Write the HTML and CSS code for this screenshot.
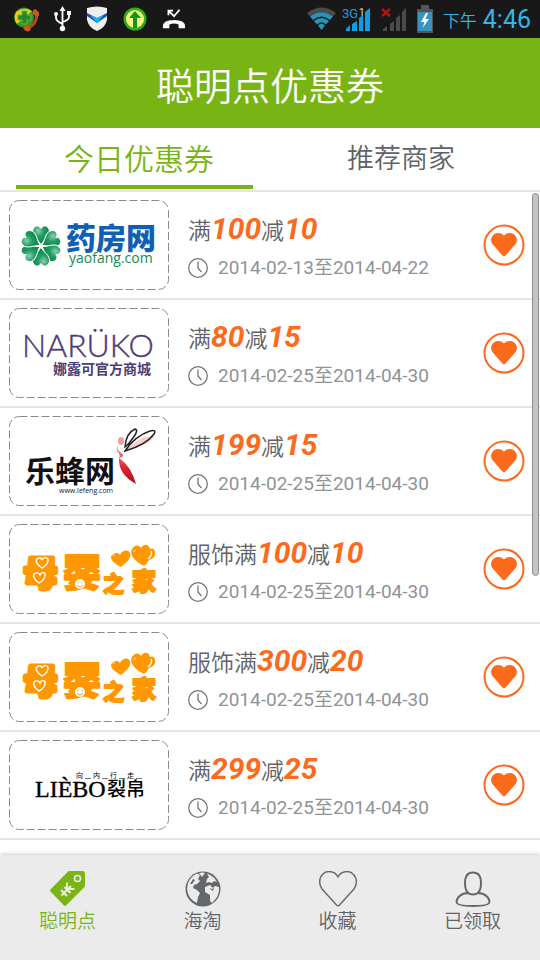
FILE: index.html
```
<!DOCTYPE html>
<html lang="zh-CN">
  <head>
    <meta charset="UTF-8" />
    <meta name="viewport" content="width=device-width, initial-scale=1.0" />
    <title>聪明点优惠券</title>
    <link rel="stylesheet" href="styles.css">
  </head>
  <body>
    <!-- 公用图标 -->
    <svg class="symbols" aria-hidden="true">
      <symbol id="clock" viewBox="0 0 20 20">
        <circle cx="10" cy="10" r="9.3" fill="none" stroke="#73777a" stroke-width="1.3" />
        <path d="M10 3.5V10l3.4 4" fill="none" stroke="#73777a" stroke-width="1.3" />
      </symbol>
      <symbol id="heart" viewBox="0 0 42 42">
        <circle cx="21" cy="21" r="19.5" fill="#fff" stroke="#fc6a1c" stroke-width="2" />
        <path d="M21 11.6C24 8.2 29 8.4 31.6 10.8C34.6 13.5 34.6 18 32 20.8L22.6 31.4Q21 33 19.4 31.4L10 20.8C7.4 18 7.4 13.5 10.4 10.8C13 8.4 18 8.2 21 11.6Z" fill="#fc6a1c" />
      </symbol>
      <symbol id="petal" viewBox="-11 -22 22 22" overflow="visible">
        <path d="M0 -1C-2 -6 -9 -9 -8.500 -15C-7.500 -21 -2 -21.500 0 -17.500C2 -21.500 7.500 -21 8.500 -15C9 -9 2 -6 0 -1Z" fill="url(#leaf)" stroke="#fff" stroke-width="1" />
      </symbol>
      <radialGradient id="leaf" cx="35%" cy="25%" r="80%">
        <stop offset="0" stop-color="#8ed0ae" />
        <stop offset="0.4" stop-color="#1f9d63" />
        <stop offset="1" stop-color="#087a44" />
      </radialGradient>
      <linearGradient id="bee" x1="0" y1="0" x2="0" y2="1">
        <stop offset="0" stop-color="#f4a5a0" />
        <stop offset="0.600" stop-color="#dd2430" />
        <stop offset="1" stop-color="#a8101c" />
      </linearGradient>
      <symbol id="muying" viewBox="0 0 160 90">
        <g class="muying">
          <text class="thick" x="15" y="61" font-size="33">母</text>
          <text x="54" y="62" font-size="38">婴</text>
          <text x="94" y="67" font-size="21">之</text>
          <text x="123" y="66" font-size="24">家</text>
        </g>
        <path d="M33 44C28 41 26 37 28 35C30 33 33 34 33 36C34 33 38 33 39 35C40 38 37 42 33 44ZM30 59C25 56 24 52 25 50C27 48 30 49 31 51C32 48 36 48 36 50C37 53 34 57 30 59Z" fill="#ff9800" stroke="#fff" stroke-width="1.400" />
        <circle cx="71" cy="60" r="5" fill="#fff" />
        <path d="M68 61Q71 65 74 61M69 58v1M73 58v1" fill="none" stroke="#ff9800" />
        <path d="M112 43C104 39 100 34 103 31C106 28 110 29 111 31C113 26 119 25 121 29C123 34 117 39 112 43Z" fill="#ff9800" />
        <path d="M135 42C125 37 120 30 123 25C126 20 131 21 132 24C135 19 140 20 141 25Q145 23 146 28Q147 34 140 36Q138 40 135 42Z" fill="#ff9800" />
        <path d="M142 27Q144 31 139 35" fill="none" stroke="#fff" stroke-width="1.400" />
        <path d="M104 32Q104 30 106 30M125 28Q125 26 127 26" fill="none" stroke="#fff" stroke-width="0.600" />
      </symbol>
    </svg>

    <div class="status-bar">
      <svg width="25" height="26" viewBox="0 0 25 26">
        <circle cx="10" cy="11.500" r="10" fill="#2d9a2c" />
        <path d="M2 6Q10 0 18 5L3 18Q-1 13 2 6Z" fill="#e8cb20" />
        <path d="M8 5h5v4h4v5h-4v4H8v-4H4V9h4Z" fill="#28862c" stroke="#6db52b" />
        <path d="M22 7C24 13 20 21 12 22" fill="none" stroke="#b8481a" stroke-width="3" stroke-linecap="round" />
        <path d="M21 6L23 8M12 22L14 23" fill="none" stroke="#cf5720" stroke-width="5" stroke-linecap="round" />
      </svg>
      <svg width="17" height="26" viewBox="0 0 17 26">
        <path d="M8.500 3V22M2 8v4q0 3 6.500 6M15 7v4q0 3-6.500 5" fill="none" stroke="#fff" stroke-width="1.800" />
        <path d="M5.500 5L8.500 0L11.500 5ZM13 5h4v4h-4Z" fill="#fff" />
        <circle cx="2" cy="8" r="2" fill="#fff" />
        <circle cx="8.500" cy="22.500" r="2.700" fill="#fff" />
      </svg>
      <svg width="22" height="26" viewBox="0 0 22 26">
        <path d="M1 2Q11-1 21 2V14Q19 22 11 25Q3 22 1 14Z" fill="#eee" />
        <path d="M1 7L11 12L21 7V10L11 17L1 10Z" fill="#1c4eb0" />
        <path d="M4 9L11 12L18 9L11 17Z" fill="#17b5ee" />
      </svg>
      <svg width="24" height="24" viewBox="0 0 24 24">
        <circle cx="12" cy="12" r="11.500" fill="#2fae1c" />
        <circle cx="12" cy="12" r="9" fill="#f3f77a" />
        <path d="M12 4L18 11H14V21H10V11H6Z" fill="#159224" />
      </svg>
      <svg width="24" height="24" viewBox="0 0 26 24">
        <path d="M7 3L13 9L19 2M7 8V3h5" fill="none" stroke="#fff" stroke-width="2" />
        <path d="M1 20Q1 13 13 13Q25 13 25 20V22H18V18Q13 16 8 18V22H1Z" fill="#fff" />
      </svg>
      <div class="status-right">
        <div class="signal">
          <svg width="31" height="24" viewBox="0 0 31 24">
            <path d="M1 6Q15.500-5 30 6L27 9.500Q15.500 1 4 9.500Z" fill="#4b4b4b" />
            <path d="M4 9.500Q15.500 1 27 9.500L24 13Q15.500 6 7 13Z" fill="#2b92ba" />
            <path d="M8 14Q15.500 8 23 14L20 17.500Q15.500 13 11 17.500ZM12 18.500Q15.500 15 19 18.500L15.500 23Z" fill="#2b92ba" />
          </svg>
          <svg width="29" height="25" viewBox="0 0 29 25">
            <path d="M4 24v-2l4-4v6ZM10 24V17l5-3V24ZM17 24V11l4-3V24ZM23 24V5l5-4V24Z" fill="#0d9ee6" />
            <text x="0" y="11" class="net">3G</text>
            <text x="17" y="9" class="slot">1</text>
          </svg>
        </div>
        <svg width="26" height="25" viewBox="0 0 26 25">
          <path d="M2 24v-2l4-3v5ZM9 24V17l4-3V24ZM15 24V11l4-3V24ZM21 24V5l4-4V24Z" fill="#4b4b4b" />
          <path d="M1 2L9 9M9 2L1 9" stroke="#b51212" stroke-width="2.400" />
        </svg>
        <svg width="16" height="28" viewBox="0 0 16 28">
          <path d="M0 4H4V0H12V4H16V28H0Z" fill="#555" />
          <path d="M1 7H15V26H1Z" fill="#3894bf" />
          <path d="M9 8L4 17H7.500L5.500 23L12 14H8.500L11 8Z" fill="#fff" />
        </svg>
        <span class="ampm">下午</span>
        <span class="time">4:46</span>
      </div>
    </div>

    <header class="header">
      <h1>聪明点优惠券</h1>
    </header>

    <div class="tabs">
      <button class="tab active">今日优惠券</button>
      <button class="tab">推荐商家</button>
    </div>

    <main class="content">
      <ul class="coupons">
        <li class="coupon">
          <svg class="logo" viewBox="0 0 160 90" role="img" aria-label="药房网">
            <rect class="frame" x="0.500" y="0.500" width="159" height="89" rx="10" />
            <g transform="translate(32 46)">
              <use href="#petal" x="-11" y="-22" width="22" height="22" />
              <use href="#petal" x="-11" y="-22" width="22" height="22" transform="rotate(60)" />
              <use href="#petal" x="-11" y="-22" width="22" height="22" transform="rotate(120)" />
              <use href="#petal" x="-11" y="-22" width="22" height="22" transform="rotate(180)" />
              <use href="#petal" x="-11" y="-22" width="22" height="22" transform="rotate(240)" />
              <use href="#petal" x="-11" y="-22" width="22" height="22" transform="rotate(300)" />
            </g>
            <text class="yaofang" x="57" y="49">药房网</text>
            <text class="yaofang-url" x="60" y="63">yaofang.com</text>
          </svg>
          <div class="info">
            <h2>满<em>100</em>减<em>10</em></h2>
            <p><svg class="clock"><use href="#clock" /></svg>2014-02-13至2014-04-22</p>
          </div>
          <button class="like" aria-label="收藏"><svg><use href="#heart" /></svg></button>
        </li>
        <li class="coupon">
          <svg class="logo" viewBox="0 0 160 90" role="img" aria-label="NARUKO">
            <rect class="frame" x="0.500" y="0.500" width="159" height="89" rx="10" />
            <text class="naruko" x="13" y="49">NARÜKO</text>
            <text class="naruko-cn" x="44" y="66">娜露可官方商城</text>
          </svg>
          <div class="info">
            <h2>满<em>80</em>减<em>15</em></h2>
            <p><svg class="clock"><use href="#clock" /></svg>2014-02-25至2014-04-30</p>
          </div>
          <button class="like" aria-label="收藏"><svg><use href="#heart" /></svg></button>
        </li>
        <li class="coupon">
          <svg class="logo" viewBox="0 0 160 90" role="img" aria-label="乐蜂网">
            <rect class="frame" x="0.500" y="0.500" width="159" height="89" rx="10" />
            <text class="lefeng" x="16" y="66">乐蜂网</text>
            <text class="lefeng-url" x="50" y="77">www.lefeng.com</text>
            <path d="M115 34L134 21L146 20Q138 31 115 34Z" fill="#f8cfca" />
            <ellipse cx="112" cy="25" rx="3" ry="4" fill="#f3a09b" />
            <path d="M111 28Q106 32 111 36Q116 39 113 41L110 42Q122 50 127 68Q109 58 110 42Q112 39 108 35Q107 30 111 28Z" fill="url(#bee)" />
            <path d="M116 31Q117 17 126 13Q130 14 124 22Q120 28 116 31ZM116 35Q126 20 141 15Q148 13 145 18Q137 29 116 35Z" fill="none" stroke="#222" stroke-width="1.500" />
          </svg>
          <div class="info">
            <h2>满<em>199</em>减<em>15</em></h2>
            <p><svg class="clock"><use href="#clock" /></svg>2014-02-25至2014-04-30</p>
          </div>
          <button class="like" aria-label="收藏"><svg><use href="#heart" /></svg></button>
        </li>
        <li class="coupon">
          <svg class="logo" viewBox="0 0 160 90" role="img" aria-label="母婴之家">
            <rect class="frame" x="0.500" y="0.500" width="159" height="89" rx="10" />
            <use href="#muying" />
          </svg>
          <div class="info">
            <h2>服饰满<em>100</em>减<em>10</em></h2>
            <p><svg class="clock"><use href="#clock" /></svg>2014-02-25至2014-04-30</p>
          </div>
          <button class="like" aria-label="收藏"><svg><use href="#heart" /></svg></button>
        </li>
        <li class="coupon">
          <svg class="logo" viewBox="0 0 160 90" role="img" aria-label="母婴之家">
            <rect class="frame" x="0.500" y="0.500" width="159" height="89" rx="10" />
            <use href="#muying" />
          </svg>
          <div class="info">
            <h2>服饰满<em>300</em>减<em>20</em></h2>
            <p><svg class="clock"><use href="#clock" /></svg>2014-02-25至2014-04-30</p>
          </div>
          <button class="like" aria-label="收藏"><svg><use href="#heart" /></svg></button>
        </li>
        <li class="coupon">
          <svg class="logo" viewBox="0 0 160 90" role="img" aria-label="裂帛">
            <rect class="frame" x="0.500" y="0.500" width="159" height="89" rx="10" />
            <text class="liebo" x="26" y="57">LIÈBO</text>
            <text class="liebo-cn" x="98" y="56">裂帛</text>
            <text class="liebo-sub" x="67" y="38">向</text>
            <text class="liebo-sub" x="84" y="38">内</text>
            <text class="liebo-sub" x="101" y="38">行</text>
            <text class="liebo-sub" x="118" y="38">走</text>
            <path d="M76 38.500h6M93 38.500h6M110 38.500h6M127 38.500h6" stroke="#777" />
          </svg>
          <div class="info">
            <h2>满<em>299</em>减<em>25</em></h2>
            <p><svg class="clock"><use href="#clock" /></svg>2014-02-25至2014-04-30</p>
          </div>
          <button class="like" aria-label="收藏"><svg><use href="#heart" /></svg></button>
        </li>
      </ul>
      <div class="scroll-thumb"></div>
    </main>

    <nav class="bottom-nav">
      <a href="#" class="active">
        <svg viewBox="0 0 36 36">
          <path d="M18 0.500Q19 0 20 0H32Q35 0 35 3V14Q35 15.500 34 16.500L16 34.500Q15 35.500 14 34.500L0.500 20.500Q-0.300 19.500 0.500 18.500Z" fill="#7ab516" />
          <circle cx="27.500" cy="7.500" r="3" fill="none" stroke="#ebebeb" stroke-width="1.600" />
          <path d="M11.500 24.500L21 15M11 19l6 6M14.500 16l6 6M17 11.500V17.500M18.500 18H24.500" fill="none" stroke="#ebebeb" stroke-width="2" />
        </svg>
        <span>聪明点</span>
      </a>
      <a href="#">
        <svg viewBox="0 0 36 36">
          <circle cx="18" cy="18" r="17.500" fill="#64686b" />
          <path d="M3 12Q6 5 12 2.500L15 4L13 8L15 10L12 13L9 14L8 17L12 19L15 22L13 26L12 32Q3 28 2 18ZM14 2Q18 1 20 2L17 6ZM22 2.500Q29 5 32 11L29 10L27 12L24 11L21 12L22 8L24 6ZM20 16L25 14L28 17L30 15L34 16Q35 25 27 32L25 30V24L20 21Z" fill="#ebebeb" />
          <path d="M5 13l3-5 2 1-3 4ZM24 17l3 1 2-1-1 3Z" fill="#64686b" />
        </svg>
        <span>海淘</span>
      </a>
      <a href="#">
        <svg class="wide" viewBox="0 0 38 36">
          <path d="M19 6C22 0 30-1 34 3C38.500 7 38 14 35 18L20.500 34Q19 35.500 17.500 34L3 18C0 14-0.500 7 4 3C8-1 16 0 19 6Z" fill="none" stroke="#64686b" stroke-width="1.400" />
        </svg>
        <span>收藏</span>
      </a>
      <a href="#">
        <svg viewBox="0 0 36 36">
          <path d="M18 1.500C12 1.500 10 6 10 12C10 18 12 23.500 18 23.500C24 23.500 26 18 26 12C26 6 24 1.500 18 1.500ZM13 22C6 22 1.500 27 1.500 31Q2 35 18 35Q34 35 34.500 31C34.500 27 30 22 23 22" fill="none" stroke="#64686b" stroke-width="1.900" />
        </svg>
        <span>已领取</span>
      </a>
    </nav>
  </body>
</html>
```
FILE: styles.css
```
* {
  box-sizing: border-box;
}

body {
  display: flex;
  flex-direction: column;
  height: 100vh;
  margin: 0;
  font-family: Roboto, "Noto Sans CJK SC", sans-serif;
  font-weight: 350;
  color: #5f6367;
  background-color: #fff;
}

h1,
h2,
p,
ul {
  margin: 0;
  padding: 0;
}

button {
  padding: 0;
  border: none;
  background: none;
  font: inherit;
  color: inherit;
  cursor: pointer;
}

.symbols {
  position: absolute;
  width: 0;
  height: 0;
}

/* 状态栏 */
.status-bar {
  flex: none;
  display: flex;
  align-items: center;
  gap: 15px;
  height: 38px;
  padding: 0 9px 0 14px;
  background-color: #181818;
}
.status-right {
  display: flex;
  align-items: center;
  gap: 10px;
  margin-left: auto;
  color: #33b5e5;
}
.signal {
  display: flex;
  gap: 5px;
}
.net {
  font-size: 13px;
  font-weight: 400;
  fill: #0d9ee6;
}
.slot {
  font-size: 10px;
  font-weight: 400;
  fill: #ddd;
}
.ampm {
  font-size: 17px;
}
.time {
  margin-left: -4px;
  font-size: 25px;
  font-weight: 400;
}

.header {
  flex: none;
  background-color: #79b415;
  color: #fff;
  text-align: center;
}
.header h1 {
  padding-top: 8px;
  font-size: 38px;
  line-height: 82px;
  font-weight: 350;
}

/* 标签切换 */
.tabs {
  flex: none;
  display: grid;
  grid-template-columns: 1fr 1fr;
  height: 64px;
  padding: 0 8px;
  border-bottom: 2px solid #e5e5e5;
}
.tab {
  position: relative;
  padding-bottom: 5px;
  font-size: 27px;
}
.tab.active {
  font-size: 30px;
  color: #79b415;
}
.tab.active::after {
  content: "";
  position: absolute;
  left: 8px;
  right: 17px;
  bottom: 1px;
  height: 4px;
  background-color: #79b415;
}

/* 优惠券列表 */
.content {
  flex: 1;
  position: relative;
  min-height: 0;
}
.coupons {
  height: 100%;
  overflow-y: auto;
  scrollbar-width: none;
  list-style: none;
}
.coupon {
  display: flex;
  align-items: center;
  gap: 19px;
  padding: 8px 15px 8px 9px;
  border-bottom: 2px solid #e5e5e5;
}
.logo {
  flex: none;
  width: 160px;
  height: 90px;
}
.info {
  flex: 1;
}
.info h2 {
  font-size: 23px;
  line-height: 36px;
  font-weight: 350;
}
.info em {
  font-size: 30px;
  line-height: 36px;
  font-weight: 700;
  color: #fc6a1c;
}
.info p {
  display: flex;
  align-items: center;
  gap: 10px;
  margin-top: 6px;
  font-size: 19px;
  line-height: 24px;
  font-weight: 400;
  color: #909396;
}
.clock {
  width: 20px;
  height: 20px;
}
.like,
.like svg {
  display: block;
  width: 42px;
  height: 42px;
}
.scroll-thumb {
  position: absolute;
  top: 1px;
  right: 1px;
  width: 7px;
  height: 383px;
  border: 1px solid #8e8e8e;
  border-radius: 4px;
  background-color: #c4c4c4;
}

/* 商家标志 */
.frame {
  fill: none;
  stroke: #8a8a8a;
  stroke-dasharray: 8 3;
}
.yaofang {
  font-size: 30px;
  font-weight: 900;
  fill: #0f5fb4;
}
.yaofang-url {
  font-family: "Open Sans", sans-serif;
  font-size: 14px;
  font-weight: 400;
  fill: #168a50;
}
.naruko {
  font-family: Lato, sans-serif;
  font-size: 32px;
  font-weight: 300;
  fill: #4c3d74;
  stroke: #4c3d74;
  stroke-width: 0.4;
}
.naruko-cn {
  font-size: 14px;
  font-weight: 700;
  fill: #4c3d74;
}
.lefeng {
  font-size: 30px;
  font-weight: 700;
  fill: #111;
}
.lefeng-url {
  font-family: "Open Sans", sans-serif;
  font-size: 7px;
  font-weight: 400;
  fill: #222;
}
.muying {
  font-weight: 900;
  fill: #ff9800;
  stroke: #ff9800;
  stroke-width: 2;
  stroke-linejoin: round;
}
.muying .thick {
  stroke-width: 5;
}
.liebo {
  font-family: "Liberation Serif", serif;
  font-size: 24px;
  font-weight: 400;
  stroke: #000;
  stroke-width: 0.4;
}
.liebo-cn {
  font-size: 19px;
  font-weight: 500;
}
.liebo-sub {
  font-size: 7px;
  font-weight: 400;
}

/* 底部导航 */
.bottom-nav {
  flex: none;
  position: relative;
  display: grid;
  grid-template-columns: repeat(4, 1fr);
  height: 105px;
  padding-top: 16px;
  background-color: #ebebeb;
  box-shadow: 0 -1px 4px rgba(0, 0, 0, 0.2);
}
.bottom-nav a {
  display: flex;
  flex-direction: column;
  align-items: center;
  gap: 2px;
  font-size: 19px;
  line-height: 26px;
  color: #5f6367;
  text-decoration: none;
}
.bottom-nav svg {
  width: 36px;
  height: 36px;
}
.bottom-nav .wide {
  width: 38px;
}
.bottom-nav .active {
  color: #79b415;
}
```
